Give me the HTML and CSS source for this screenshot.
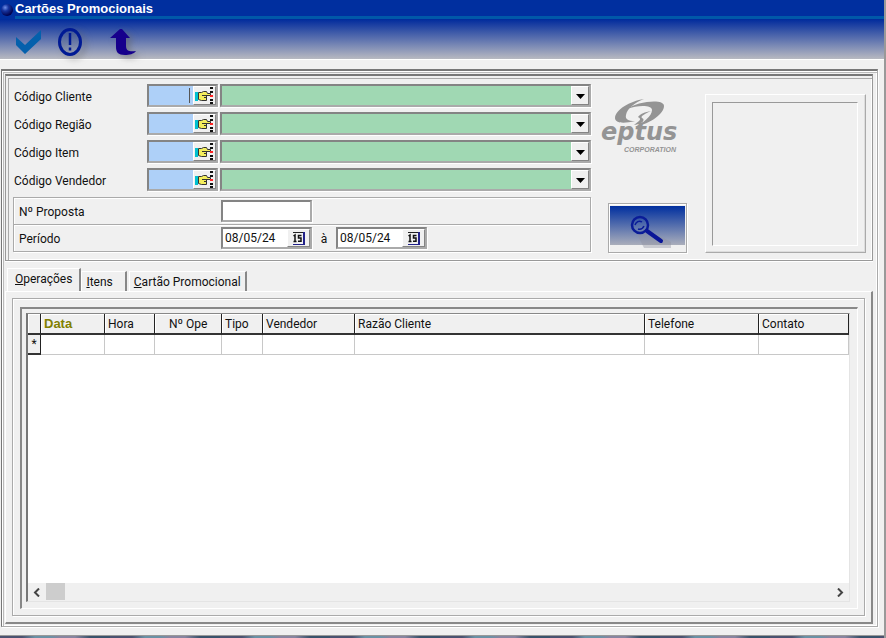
FILE: index.html
```html
<!DOCTYPE html>
<html lang="pt-BR">
<head>
<meta charset="utf-8">
<title>Cartões Promocionais</title>
<link rel="stylesheet" href="styles.css">
</head>
<body>
<svg class="defs" aria-hidden="true">
  <symbol id="hand" viewBox="0 0 19 17">
    <path fill="#00c0d0" d="M0 5h3v9H0z"/>
    <path fill="#f4ee5c" stroke="#333" d="M3.500 5.500h3l2-1h3l1 2h3v2h-4v5h-5l-3-1z"/>
    <path fill="none" stroke="#333" d="M7 8.500h5M9 10.500h3"/>
    <path fill="#111" d="M15 0h3v2h-3zM15 4h3v2h-3zM15 12h3v2h-3zM15 15h3v2h-3z"/>
    <path fill="#f22" d="M15 8h3v2h-3z"/>
  </symbol>
  <symbol id="arrow" viewBox="0 0 9 5"><path d="M0 0h9L4.500 5z"/></symbol>
  <symbol id="cal" viewBox="0 0 13 13">
    <path fill="#222" d="M1 0h12v1H1z"/><path fill="#22228a" d="M11 0h2v13H1v-1h10z"/>
    <path fill="none" stroke="#111" stroke-width="1.500" d="M1.500 4L3 3v6M1.500 9.500h3M9.500 3.500H6.500V6H9v3.300H6"/>
  </symbol>
</svg>
<header class="title">
  <svg width="14" height="16" viewBox="0 0 14 16" aria-hidden="true">
    <defs><radialGradient id="ball" cx=".35" cy=".3" r=".7"><stop offset="0" stop-color="#6f8fe8"/><stop offset=".4" stop-color="#1735a0"/><stop offset="1" stop-color="#00004c"/></radialGradient></defs>
    <circle cx="7" cy="10" r="6" fill="url(#ball)"/>
  </svg>
  <h1>Cartões Promocionais</h1>
</header>
<nav class="toolbar">
  <button type="button" aria-label="Confirmar"><svg width="26" height="26" viewBox="0 0 26 26"><path fill="#0460ac" d="M1 8l9 8L26 1v9L10 25 1 16z"/></svg></button>
  <button type="button" class="info" aria-label="Informações"><svg width="26" height="30" viewBox="0 0 26 30"><ellipse cx="13" cy="15" rx="10.500" ry="12.500" fill="none" stroke="#001a94" stroke-width="3"/><path stroke="#001a94" stroke-width="2.500" d="M13 6v12M13 20.500v3"/></svg></button>
  <button type="button" class="back" aria-label="Voltar"><svg width="28" height="28" viewBox="0 0 28 28"><path fill="#16008c" d="M11 1h2l8 9h-4v8c0 5 4 6 10 5-2 3-7 4-11 4-7 0-9-3-9-8v-9H1z"/></svg></button>
</nav>
<main class="frame">
  <form class="filters">
    <section class="fields">
      <div class="lookup">
        <label for="c1">Código Cliente</label>
        <div class="code active"><input id="c1"><button type="button" aria-label="Localizar cliente"><svg width="19" height="17"><use href="#hand"/></svg></button></div>
        <div class="combo"><select aria-label="Cliente"><option></option></select><svg><use href="#arrow" width="9" height="5" x="4" y="7"/></svg></div>
      </div>
      <div class="lookup">
        <label for="c2">Código Região</label>
        <div class="code"><input id="c2"><button type="button" aria-label="Localizar região"><svg width="19" height="17"><use href="#hand"/></svg></button></div>
        <div class="combo"><select aria-label="Região"><option></option></select><svg><use href="#arrow" width="9" height="5" x="4" y="7"/></svg></div>
      </div>
      <div class="lookup">
        <label for="c3">Código Item</label>
        <div class="code"><input id="c3"><button type="button" aria-label="Localizar item"><svg width="19" height="17"><use href="#hand"/></svg></button></div>
        <div class="combo"><select aria-label="Item"><option></option></select><svg><use href="#arrow" width="9" height="5" x="4" y="7"/></svg></div>
      </div>
      <div class="lookup">
        <label for="c4">Código Vendedor</label>
        <div class="code"><input id="c4"><button type="button" aria-label="Localizar vendedor"><svg width="19" height="17"><use href="#hand"/></svg></button></div>
        <div class="combo"><select aria-label="Vendedor"><option></option></select><svg><use href="#arrow" width="9" height="5" x="4" y="7"/></svg></div>
      </div>
      <div class="extra">
        <div class="line"><label for="prop">Nº Proposta</label><div class="box"><input id="prop"></div></div>
        <div class="line"><label for="d1">Período</label>
          <div class="box"><input id="d1" value="08/05/24"><button type="button" aria-label="Calendário inicial"><svg width="13" height="13"><use href="#cal"/></svg></button></div>
          <label class="to" for="d2">à</label>
          <div class="box"><input id="d2" value="08/05/24"><button type="button" aria-label="Calendário final"><svg width="13" height="13"><use href="#cal"/></svg></button></div>
        </div>
      </div>
    </section>
    <section class="brand">
      <svg width="84" height="54" viewBox="0 0 84 54" role="img" aria-label="eptus corporation">
        <g fill="#949494">
          <path d="M44 1C30 3 15 12 15 20c0 5 8 6 20 3-7 0-10-2-9-6C27 11 34 5 44 1z"/>
          <path d="M27 11C36 4 64 0 64 8c0 8-13 17-29 21 8-4 17-11 17-17 0-5-14-5-25-1z"/>
          <path d="M51 13c-6 1-11 3-13 6 2 1 3 2 1 4l-5 4c8-1 12-5 8-7-2-2 3-4 9-7z"/>
        </g>
        <text class="logo" x="1" y="42">eptus</text>
        <text class="corp" x="24" y="54">CORPORATION</text>
      </svg>
      <button type="button" class="search" aria-label="Pesquisar"><svg width="74" height="43" viewBox="0 0 74 43">
        <path fill="#8e909f" opacity=".4" d="M26 27l9-5 25 13v6H33z"/>
        <circle cx="29" cy="18" r="8" fill="none" stroke="#0a1c98" stroke-width="2.500"/>
        <path fill="none" stroke="#0a1c98" stroke-width="1.500" d="M24 18c1-3 4-5 7-3M27 22c3 1 5-1 6-3"/>
        <path stroke="#0a1698" stroke-width="4" stroke-linecap="round" d="M36 24l14 10"/></svg></button>
    </section>
    <div class="picture"><div></div></div>
  </form>
  <div class="tabs" role="tablist">
    <button type="button" role="tab" aria-selected="true"><u>O</u>perações</button>
    <button type="button" role="tab"><u>I</u>tens</button>
    <button type="button" role="tab"><u>C</u>artão Promocional</button>
  </div>
  <section class="page"><div class="ring"><div class="well"><div class="grid">
    <table>
      <colgroup><col class="w0"><col class="w1"><col class="w2"><col class="w3"><col class="w4"><col class="w5"><col><col class="w7"><col class="w8"></colgroup>
      <thead><tr><th></th><th class="sorted">Data</th><th>Hora</th><th class="num">Nº Ope</th><th>Tipo</th><th>Vendedor</th><th>Razão Cliente</th><th>Telefone</th><th>Contato</th></tr></thead>
      <tbody><tr><th>*</th><td></td><td></td><td></td><td></td><td></td><td></td><td></td><td></td></tr></tbody>
    </table>
    <div class="scroll">
      <button type="button" aria-label="Rolar à esquerda"><svg width="8" height="9" viewBox="0 0 8 9"><path d="M6 .5L2 4.500l4 4"/></svg></button>
      <span class="thumb"></span>
      <button type="button" aria-label="Rolar à direita"><svg width="8" height="9" viewBox="0 0 8 9"><path d="M2 .5l4 4-4 4"/></svg></button>
    </div>
  </div></div></div></section>
</main>
<footer></footer>
</body>
</html>
```
FILE: styles.css
```css
* { box-sizing: border-box; }
body {
  margin: 0;
  min-height: 100vh;
  display: flex;
  flex-direction: column;
  background: #f0f0f0;
  border-right: 2px solid #999;
  font: 12px/16px Roboto, "Liberation Sans", sans-serif;
  color: #111;
}
input, button, select { font: inherit; color: inherit; margin: 0; padding: 0; border: 0; border-radius: 0; outline: 0; min-width: 0; }
button { background: #f0f0f0; display: flex; align-items: center; justify-content: center; }
.defs { display: none; }

.title { display: flex; height: 19px; background: #002f9f; }
.title svg { flex: none; margin-right: 1px; }
.title h1 { flex: 1; margin: 0; font: bold 13px/16px "Liberation Sans", sans-serif; color: #fff; padding-top: 1px; border-bottom: 3px solid #0058a8; }
.toolbar { display: flex; align-items: center; gap: 16px; height: 41px; padding: 5px 0 0 15px; background: linear-gradient(#002a9c, #b8b9c1); border-bottom: 1px solid #fff; }
.toolbar button { background: none; }
.toolbar .info svg, .toolbar .back svg { filter: drop-shadow(4px 3px 3px #6668); }
.toolbar .back { margin-left: 10px; }

.frame {
  flex: 1;
  display: flex;
  flex-direction: column;
  margin: 9px 6px 8px 1px;
  padding: 3px 3px 2px 2px;
  border: 2px solid #777;
  border-width: 2px 1px 1px 1px;
  border-color: #777 #aaa #aaa #777;
  box-shadow: inset 1px 1px #fff, inset 2px 2px #bbb, inset -1px -1px #fff, 1px 1px #fff;
}
.filters {
  display: flex;
  margin: 0 1px 0 1px;
  padding: 8px 6px 7px 7px;
  height: 187px;
  border: 1px solid #999;
  border-top: 2px solid #777;
  box-shadow: inset 2px 2px #f0f0f0, inset 3px 3px #aaa, inset -1px -1px #fff, 0 1px #fff;
}
.fields { flex: 1; }
.lookup { display: grid; grid-template-columns: 131px 71px 1fr; column-gap: 2px; height: 23px; margin-bottom: 5px; margin-left: 1px; }
.lookup label { padding-top: 5px; }
.code, .combo, .box { border: 2px solid; border-color: #848484 #aaa #aaa #848484; box-shadow: 1px 1px #fff; }
.code { display: flex; background: #aed0f8; }
.code input { flex: 1; background: none; text-align: right; }
.code.active input { background: linear-gradient(#555, #555) 40px 2px / 1px 15px no-repeat; }
.code button, .box button { width: 23px; border: 1px solid; border-color: #fff #848484 #848484 #fff; }
.combo { display: grid; background: #a0d8b3; }
.combo select, .combo svg { grid-area: 1 / 1; }
.combo select { appearance: none; background: none; width: 100%; }
.combo svg { justify-self: end; width: 18px; height: 19px; background: #f0f0f0; border: 1px solid; border-color: #fff #848484 #848484 #fff; pointer-events: none; }

.extra { margin-top: 6px; border: 1px solid #aaa; box-shadow: inset 1px 1px #fff, 1px 1px #fff; }
.line { display: flex; align-items: center; height: 26px; padding-left: 5px; }
.line + .line { border-top: 1px solid #aaa; height: 27px; box-shadow: inset 0 1px #fff; }
.line label { width: 202px; padding-top: 2px; }
.line .to { width: 24px; text-align: center; }
.box { display: flex; width: 91px; height: 22px; background: #fff; }
.box input { flex: 1; background: none; padding-left: 2px; }

.brand { width: 114px; padding: 14px 0 0 9px; display: flex; flex-direction: column; justify-content: space-between; }
.logo { font: italic bold 24px "DejaVu Sans", sans-serif; fill: #949494; }
.corp { font: italic bold 7px "Liberation Sans", sans-serif; fill: #949494; }
.search { width: 79px; height: 50px; margin-left: 8px; border: 1px solid #aaa; background: linear-gradient(#002f9f, #aaaebb) 1px 2px / 75px 39px no-repeat #f0f0f0; box-shadow: inset 1px 1px #fff, 1px 1px #fff; }
.picture { width: 161px; margin-top: 10px; height: 159px; padding: 7px 7px 6px 6px; border: 1px solid; border-color: #fff #aaa #aaa #fff; box-shadow: inset -1px -1px #ddd; }
.picture div { height: 100%; border: 1px solid; border-color: #999 #fff #fff #999; }

.tabs { display: flex; align-items: flex-end; height: 30px; margin-left: 3px; }
.tabs button { height: 20px; padding: 0 4px; border: 1px solid #fff; border-bottom: 0; border-right: 2px solid #888; }
.tabs button[aria-selected] { height: 23px; padding: 0 7px 3px; }
.tabs button:nth-child(2) { padding-right: 12px; }
.tabs button:nth-child(3) { margin-left: 2px; }
.page { flex: 1; display: flex; margin: 0 1px 0 1px; padding: 6px; border: 2px solid; border-width: 1px 2px 2px 1px; border-color: #fff #888 #888 #fff; }
.ring { flex: 1; display: flex; padding: 8px 6px 6px 7px; border: 1px solid #aaa; box-shadow: inset 1px 1px #fff, 1px 1px #fff; }
.well { flex: 1; display: flex; padding: 4px 7px 6px 4px; border: 2px solid; border-width: 2px 1px 1px 2px; border-color: #888 #fff #fff #888; }
.grid { flex: 1; display: flex; flex-direction: column; background: #fff; border: 2px solid; border-width: 1px 1px 1px 2px; border-color: #888 #e4e4e4 #e4e4e4 #777; }
table { width: 100%; table-layout: fixed; border-collapse: separate; border-spacing: 0; }
th, td { height: 20px; padding: 0; border-right: 1px solid #c8c8c8; border-bottom: 1px solid #c8c8c8; line-height: 16px; }
th { background: #f0f0f0; font-weight: normal; text-align: left; border-right: 1px solid #222; border-bottom: 2px solid #333; }
thead th { height: 21px; padding-left: 3px; box-shadow: inset 1px 1px #fff; }
thead .num { padding-left: 14px; }
tbody th { text-align: center; }
.sorted { color: #808000; font: bold 13px/16px "Liberation Sans", sans-serif; }
.w0 { width: 13px; } .w1 { width: 64px; } .w2 { width: 50px; } .w3 { width: 67px; } .w4 { width: 41px; } .w5 { width: 92px; } .w7 { width: 114px; } .w8 { width: 90px; }
.scroll { display: flex; height: 18px; margin-top: auto; background: #f0f0f0; }
.scroll button { width: 18px; }
.scroll path { fill: none; stroke: #444; stroke-width: 2; }
.thumb { width: 19px; height: 17px; background: #cdcdcd; margin-right: auto; }
footer { height: 3px; border-top: 1px solid #999; background: repeating-linear-gradient(90deg, #4b5270 0 22px, #6b91a5 35px 50px, #8885a0 60px 75px, #39526b 90px 110px); }
```
